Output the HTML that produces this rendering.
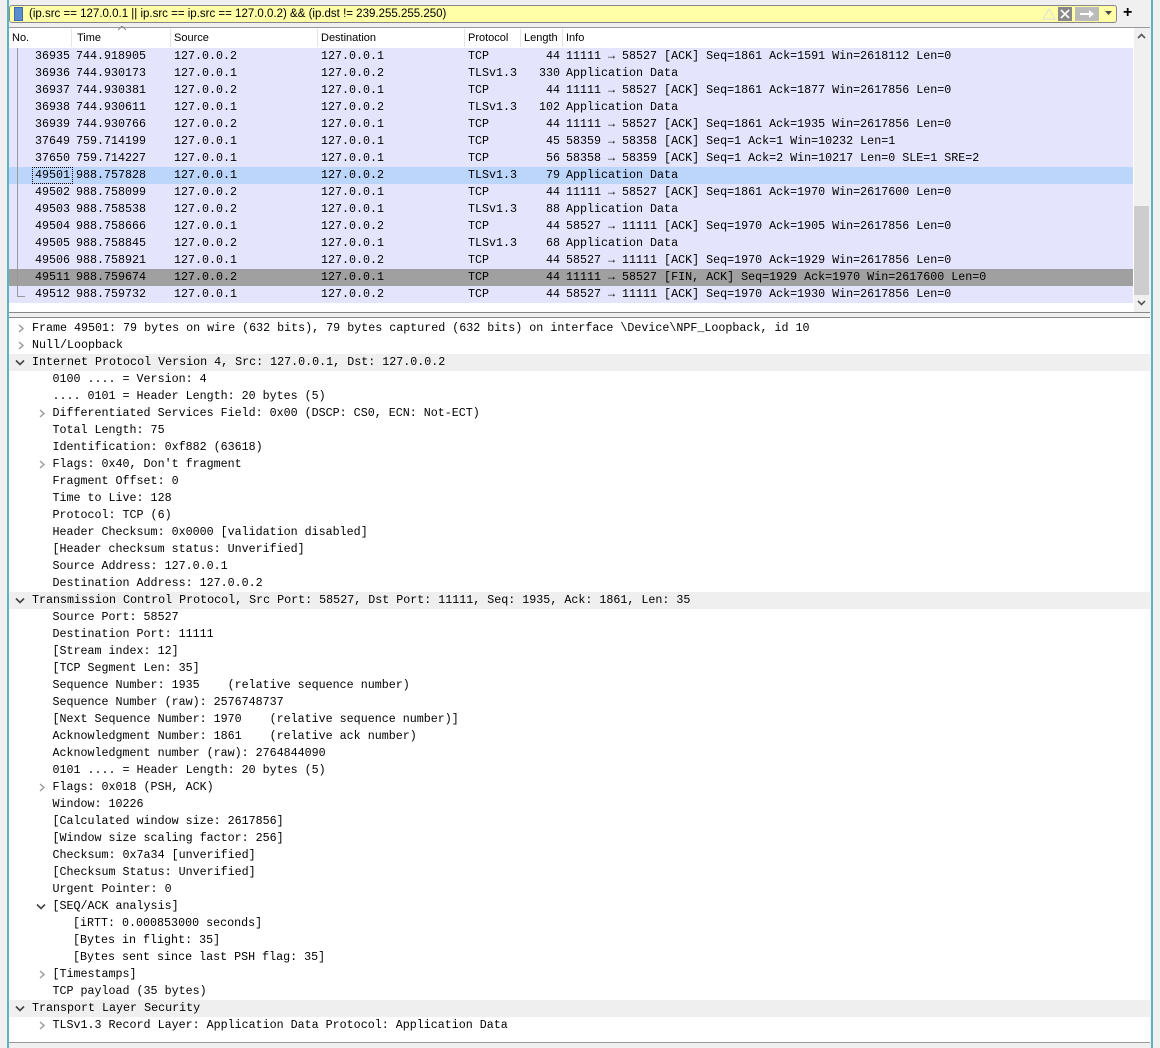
<!DOCTYPE html>
<html><head><meta charset="utf-8"><style>
*{margin:0;padding:0;box-sizing:border-box}
body{width:1160px;height:1048px;background:#f0f0f0;position:relative;overflow:hidden;font-family:"Liberation Mono",monospace;font-size:11.68px;color:#000}
.abs{position:absolute}
.mono{font-family:"Liberation Mono",monospace;font-size:11.68px;white-space:pre}
.row{position:absolute;left:9px;width:1124px;height:17px;background:#e4e4fc;line-height:17px}
.row span{position:absolute;top:0}
.d{position:absolute;left:9px;width:1141px;height:17px;line-height:17px;white-space:pre}
.ar{position:absolute;top:4px}
</style></head><body>
<div class="abs" style="left:7px;top:0;width:2px;height:1048px;background:#5fb3c0"></div>
<div class="abs" style="left:1151px;top:0;width:2px;height:1048px;background:#5fb3c0"></div>
<div class="abs" style="left:9px;top:5px;width:1108px;height:18px;background:#ffffa8;border:1px solid #888;border-radius:3px"></div>
<div class="abs" style="left:14px;top:7px;width:9px;height:14px;background:#5a8cd0;border:1px solid #3a6ab0"></div>
<div class="abs" style="left:29px;top:6px;font-family:'Liberation Sans',sans-serif;font-size:11.5px;line-height:16px;white-space:pre">(ip.src == 127.0.0.1 || ip.src == ip.src == 127.0.0.2) &amp;&amp; (ip.dst != 239.255.255.250)</div>
<svg class="abs" style="left:1042px;top:8px" width="14" height="12"><path d="M7 1L13 11H1Z" fill="none" stroke="#ddd"/></svg>
<div class="abs" style="left:1058px;top:7px;width:14px;height:14px;background:#888"><svg width="14" height="14"><path d="M3 3L11 11M11 3L3 11" stroke="#fff" stroke-width="1.6"/></svg></div>
<div class="abs" style="left:1075px;top:7px;width:24px;height:14px;background:#bbb"><svg width="24" height="14"><path d="M5 6h9v-3l5 4-5 4v-3H5z" fill="#fff"/></svg></div>
<svg class="abs" style="left:1105px;top:11px" width="8" height="5"><path d="M0 0h7L3.5 4z" fill="#444"/></svg>
<div class="abs" style="left:1123px;top:4px;font-size:16px;font-weight:bold;font-family:'Liberation Sans'">+</div>
<div class="abs" style="left:9px;top:27px;width:1141px;height:286px;background:#fff;border-top:1px solid #999;border-bottom:1px solid #888"></div>
<div class="abs" style="font-family:'Liberation Sans',sans-serif;font-size:11px;top:32px;left:12px">No.</div>
<div class="abs" style="font-family:'Liberation Sans',sans-serif;font-size:11px;top:32px;left:77px">Time</div>
<svg class="abs" style="left:118px;top:26px" width="8" height="5"><path d="M0 4L4 0L8 4" fill="none" stroke="#888"/></svg>
<div class="abs" style="font-family:'Liberation Sans',sans-serif;font-size:11px;top:32px;left:174px">Source</div>
<div class="abs" style="font-family:'Liberation Sans',sans-serif;font-size:11px;top:32px;left:321px">Destination</div>
<div class="abs" style="font-family:'Liberation Sans',sans-serif;font-size:11px;top:32px;left:468px">Protocol</div>
<div class="abs" style="font-family:'Liberation Sans',sans-serif;font-size:11px;top:32px;left:524px">Length</div>
<div class="abs" style="font-family:'Liberation Sans',sans-serif;font-size:11px;top:32px;left:566px">Info</div>
<div class="abs" style="left:71px;top:29px;width:1px;height:18px;background:#e5e5e5"></div>
<div class="abs" style="left:170px;top:29px;width:1px;height:18px;background:#e5e5e5"></div>
<div class="abs" style="left:317px;top:29px;width:1px;height:18px;background:#e5e5e5"></div>
<div class="abs" style="left:464px;top:29px;width:1px;height:18px;background:#e5e5e5"></div>
<div class="abs" style="left:520px;top:29px;width:1px;height:18px;background:#e5e5e5"></div>
<div class="abs" style="left:562px;top:29px;width:1px;height:18px;background:#e5e5e5"></div>
<div class="abs" style="left:1134px;top:28px;width:16px;height:284px;background:#f0f0f0"></div>
<div class="abs" style="left:1134px;top:206px;width:15px;height:89px;background:#cdcdcd"></div>
<svg class="abs" style="left:1137px;top:33px" width="9" height="6"><path d="M1 5L4.5 1.5L8 5" fill="none" stroke="#555" stroke-width="1.6"/></svg>
<svg class="abs" style="left:1137px;top:300px" width="9" height="6"><path d="M1 1L4.5 4.5L8 1" fill="none" stroke="#555" stroke-width="1.6"/></svg>
<div id="pl"></div>
<div class="abs" style="left:17px;top:48px;width:1px;height:249px;background:#999"></div>
<div class="abs" style="left:17px;top:296px;width:8px;height:1px;background:#999"></div>
<div class="abs" style="left:32px;top:167px;width:41px;height:17px;border:1px dotted #000"></div>
<div class="abs" style="left:9px;top:317px;width:1141px;height:726px;background:#fff;border-top:1px solid #888;border-bottom:1px solid #999"></div>
<div id="dt"></div>
<script>
var P=[
["36935","744.918905","127.0.0.2","127.0.0.1","TCP","44","11111 → 58527 [ACK] Seq=1861 Ack=1591 Win=2618112 Len=0"],
["36936","744.930173","127.0.0.1","127.0.0.2","TLSv1.3","330","Application Data"],
["36937","744.930381","127.0.0.2","127.0.0.1","TCP","44","11111 → 58527 [ACK] Seq=1861 Ack=1877 Win=2617856 Len=0"],
["36938","744.930611","127.0.0.1","127.0.0.2","TLSv1.3","102","Application Data"],
["36939","744.930766","127.0.0.2","127.0.0.1","TCP","44","11111 → 58527 [ACK] Seq=1861 Ack=1935 Win=2617856 Len=0"],
["37649","759.714199","127.0.0.1","127.0.0.1","TCP","45","58359 → 58358 [ACK] Seq=1 Ack=1 Win=10232 Len=1"],
["37650","759.714227","127.0.0.1","127.0.0.1","TCP","56","58358 → 58359 [ACK] Seq=1 Ack=2 Win=10217 Len=0 SLE=1 SRE=2"],
["49501","988.757828","127.0.0.1","127.0.0.2","TLSv1.3","79","Application Data"],
["49502","988.758099","127.0.0.2","127.0.0.1","TCP","44","11111 → 58527 [ACK] Seq=1861 Ack=1970 Win=2617600 Len=0"],
["49503","988.758538","127.0.0.2","127.0.0.1","TLSv1.3","88","Application Data"],
["49504","988.758666","127.0.0.1","127.0.0.2","TCP","44","58527 → 11111 [ACK] Seq=1970 Ack=1905 Win=2617856 Len=0"],
["49505","988.758845","127.0.0.2","127.0.0.1","TLSv1.3","68","Application Data"],
["49506","988.758921","127.0.0.1","127.0.0.2","TCP","44","58527 → 11111 [ACK] Seq=1970 Ack=1929 Win=2617856 Len=0"],
["49511","988.759674","127.0.0.2","127.0.0.1","TCP","44","11111 → 58527 [FIN, ACK] Seq=1929 Ack=1970 Win=2617600 Len=0"],
["49512","988.759732","127.0.0.1","127.0.0.2","TCP","44","58527 → 11111 [ACK] Seq=1970 Ack=1930 Win=2617856 Len=0"]];
var h="";
P.forEach(function(r,i){var bg=i==7?"#bbd5fb":(i==13?"#a0a0a0":"#e4e4fc");
h+='<div class="row mono" style="top:'+(48+17*i)+'px;background:'+bg+'">'+
'<span style="left:26px">'+r[0]+'</span><span style="left:67px">'+r[1]+'</span><span style="left:165px">'+r[2]+'</span><span style="left:312px">'+r[3]+'</span><span style="left:459px">'+r[4]+'</span><span style="right:573px">'+r[5]+'</span><span style="left:557px">'+r[6]+'</span></div>';});
document.getElementById("pl").innerHTML=h;
var D=[
[0,">","Frame 49501: 79 bytes on wire (632 bits), 79 bytes captured (632 bits) on interface \\Device\\NPF_Loopback, id 10"],
[0,">","Null/Loopback"],
[0,"v","Internet Protocol Version 4, Src: 127.0.0.1, Dst: 127.0.0.2",1],
[1,"","0100 .... = Version: 4"],
[1,"",".... 0101 = Header Length: 20 bytes (5)"],
[1,">","Differentiated Services Field: 0x00 (DSCP: CS0, ECN: Not-ECT)"],
[1,"","Total Length: 75"],
[1,"","Identification: 0xf882 (63618)"],
[1,">","Flags: 0x40, Don't fragment"],
[1,"","Fragment Offset: 0"],
[1,"","Time to Live: 128"],
[1,"","Protocol: TCP (6)"],
[1,"","Header Checksum: 0x0000 [validation disabled]"],
[1,"","[Header checksum status: Unverified]"],
[1,"","Source Address: 127.0.0.1"],
[1,"","Destination Address: 127.0.0.2"],
[0,"v","Transmission Control Protocol, Src Port: 58527, Dst Port: 11111, Seq: 1935, Ack: 1861, Len: 35",1],
[1,"","Source Port: 58527"],
[1,"","Destination Port: 11111"],
[1,"","[Stream index: 12]"],
[1,"","[TCP Segment Len: 35]"],
[1,"","Sequence Number: 1935    (relative sequence number)"],
[1,"","Sequence Number (raw): 2576748737"],
[1,"","[Next Sequence Number: 1970    (relative sequence number)]"],
[1,"","Acknowledgment Number: 1861    (relative ack number)"],
[1,"","Acknowledgment number (raw): 2764844090"],
[1,"","0101 .... = Header Length: 20 bytes (5)"],
[1,">","Flags: 0x018 (PSH, ACK)"],
[1,"","Window: 10226"],
[1,"","[Calculated window size: 2617856]"],
[1,"","[Window size scaling factor: 256]"],
[1,"","Checksum: 0x7a34 [unverified]"],
[1,"","[Checksum Status: Unverified]"],
[1,"","Urgent Pointer: 0"],
[1,"v","[SEQ/ACK analysis]"],
[2,"","[iRTT: 0.000853000 seconds]"],
[2,"","[Bytes in flight: 35]"],
[2,"","[Bytes sent since last PSH flag: 35]"],
[1,">","[Timestamps]"],
[1,"","TCP payload (35 bytes)"],
[0,"v","Transport Layer Security",1],
[1,">","TLSv1.3 Record Layer: Application Data Protocol: Application Data"]];
h="";
D.forEach(function(r,i){var x=23+20.5*r[0];var a="";
if(r[1]==">")a='<svg class="ar" style="left:'+(x-15)+'px" width="8" height="9"><path d="M2 1L6 4.5L2 8" fill="none" stroke="#999" stroke-width="1.4"/></svg>';
if(r[1]=="v")a='<svg class="ar" style="left:'+(x-17)+'px;top:5px" width="10" height="7"><path d="M1 1.5L5 5.5L9 1.5" fill="none" stroke="#444" stroke-width="1.6"/></svg>';
var t=(r[3]&&r[0]==0)?'background:#efefef;':'';
h+='<div class="d mono" style="top:'+(320+17*i)+'px;'+t+'">'+a+'<span style="position:absolute;left:'+x+'px">'+r[2].replace(/&/g,"&amp;").replace(/</g,"&lt;")+'</span></div>';});
document.getElementById("dt").innerHTML=h;
</script>
</body></html>
